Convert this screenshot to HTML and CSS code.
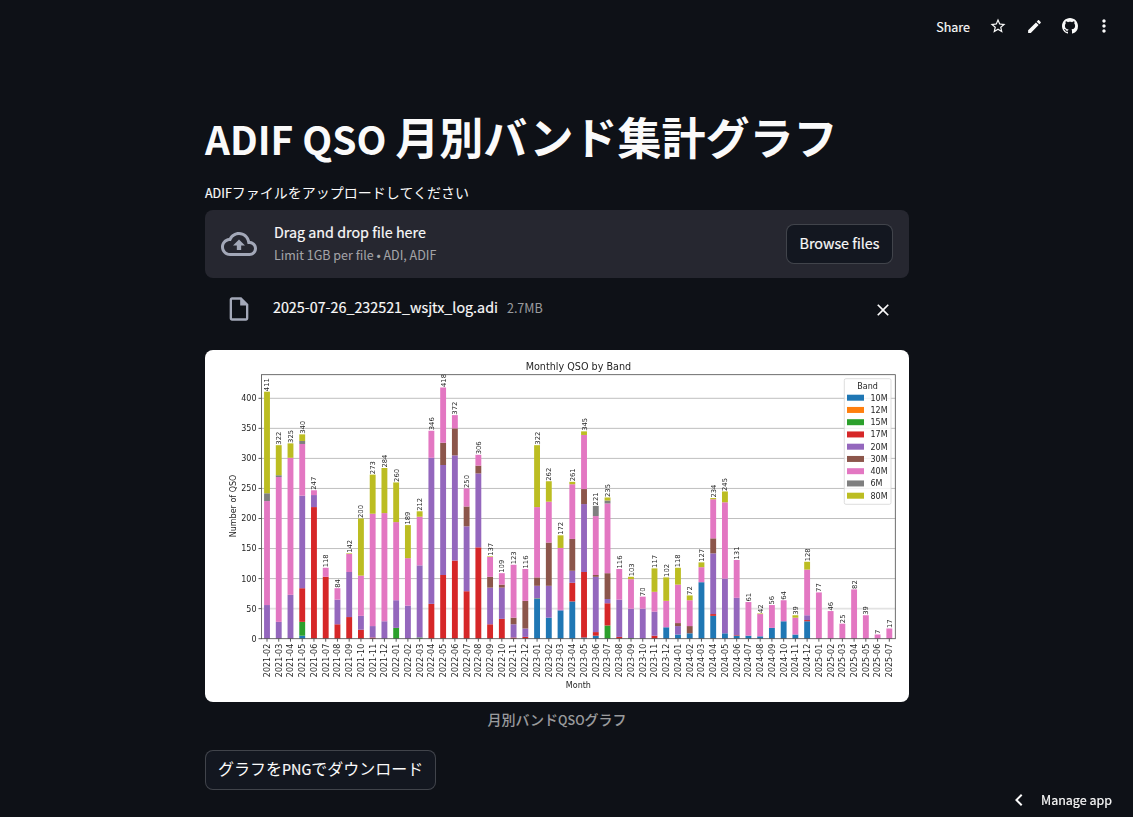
FILE: index.html
```html
<!DOCTYPE html>
<html lang="ja">
<head>
<meta charset="utf-8">
<title>ADIF QSO 月別バンド集計グラフ</title>
<link rel="stylesheet" href="styles.css">
</head>
<body>
<header class="topbar">
  <span class="share ink">Share</span>
  <span class="tool"><svg class="i18" viewBox="0 0 24 24"><path d="M22 9.24l-7.19-.62L12 2 9.19 8.63 2 9.24l5.46 4.73L5.82 21 12 17.27 18.18 21l-1.63-7.03L22 9.24zM12 15.4l-3.76 2.27 1-4.28-3.32-2.88 4.38-.38L12 6.1l1.71 4.04 4.38.38-3.32 2.88 1 4.28L12 15.4z"/></svg></span>
  <span class="tool"><svg class="i17" viewBox="0 0 24 24"><path d="M3 17.25V21h3.75L17.81 9.94l-3.75-3.75L3 17.25zM20.71 7.04c.39-.39.39-1.02 0-1.41l-2.34-2.34c-.39-.39-1.02-.39-1.41 0l-1.83 1.83 3.75 3.75 1.83-1.83z"/></svg></span>
  <span class="tool"><svg class="i16" viewBox="0 0 16 16"><path d="M8 0C3.58 0 0 3.58 0 8c0 3.54 2.29 6.53 5.47 7.59.4.07.55-.17.55-.38 0-.19-.01-.82-.01-1.49-2.01.37-2.53-.49-2.69-.94-.09-.23-.48-.94-.82-1.13-.28-.15-.68-.52-.01-.53.63-.01 1.08.58 1.23.82.72 1.21 1.87.87 2.33.66.07-.52.28-.87.51-1.07-1.78-.2-3.64-.89-3.64-3.95 0-.87.31-1.59.82-2.15-.08-.2-.36-1.02.08-2.12 0 0 .67-.21 2.2.82.64-.18 1.32-.27 2-.27.68 0 1.36.09 2 .27 1.53-1.04 2.2-.82 2.2-.82.44 1.1.16 1.92.08 2.12.51.56.82 1.27.82 2.15 0 3.07-1.87 3.75-3.65 3.95.29.25.54.73.54 1.48 0 1.07-.01 1.93-.01 2.2 0 .21.15.46.55.38A8.013 8.013 0 0016 8c0-4.42-3.58-8-8-8z"/></svg></span>
  <span class="tool tool-last"><svg class="i20" viewBox="0 0 24 24"><path d="M12 8c1.1 0 2-.9 2-2s-.9-2-2-2-2 .9-2 2 .9 2 2 2zm0 2c-1.1 0-2 .9-2 2s.9 2 2 2 2-.9 2-2-.9-2-2-2zm0 6c-1.1 0-2 .9-2 2s.9 2 2 2 2-.9 2-2-.9-2-2-2z"/></svg></span>
</header>

<main class="main">
  <h1 class="title"><span class="lat lat-title">ADIF QSO </span>月別バンド集計グラフ</h1>
  <label class="field-label"><span class="lat ink">ADIF</span>ファイルをアップロードしてください</label>
  <section class="dropzone">
    <svg class="cloud" viewBox="0 0 24 24"><path d="M19.35 10.04C18.67 6.59 15.64 4 12 4 9.11 4 6.6 5.64 5.35 8.04 2.34 8.36 0 10.91 0 14c0 3.31 2.69 6 6 6h13c2.76 0 5-2.24 5-5 0-2.64-2.05-4.78-4.65-4.96zM19 18H6c-2.21 0-4-1.79-4-4 0-2.05 1.53-3.76 3.56-3.97l1.07-.11.5-.95C8.08 7.14 9.94 6 12 6c2.62 0 4.88 1.86 5.39 4.43l.3 1.5 1.53.11c1.56.1 2.78 1.41 2.78 2.96 0 1.65-1.35 3-3 3zM8 13h2.55v3h2.9v-3H16l-4-4z"/></svg>
    <div class="drop-text">
      <div class="drop-title ink">Drag and drop file here</div>
      <div class="drop-limit">Limit 1GB per file • ADI, ADIF</div>
    </div>
    <button class="btn browse"><span class="lat ink">Browse files</span></button>
  </section>
  <section class="file-row">
    <svg class="file-icon" viewBox="0 0 24 24"><path d="M14 2H6c-1.1 0-1.99.9-1.99 2L4 20c0 1.1.89 2 1.99 2H18c1.1 0 2-.9 2-2V8l-6-6zM6 20V4h7v5h5v11H6z"/></svg>
    <span class="file-name ink">2025-07-26_232521_wsjtx_log.adi</span>
    <span class="file-size">2.7MB</span>
    <svg class="file-close" viewBox="0 0 24 24"><path d="M19 6.41L17.59 5 12 10.59 6.41 5 5 6.41 10.59 12 5 17.59 6.41 19 12 13.41 17.59 19 19 17.59 13.41 12z"/></svg>
  </section>
  <figure class="figure">
    <svg id="chart" class="chart" viewBox="0 0 704 352"></svg>
    <figcaption class="caption">月別バンド<span class="lat">QSO</span>グラフ</figcaption>
  </figure>
  <button class="btn download">グラフを<span class="lat ink">PNG</span>でダウンロード</button>
</main>

<div class="manage">
  <svg class="chev" viewBox="0 0 24 24"><path d="M15.41 7.41L14 6l-6 6 6 6 1.41-1.41L10.83 12z"/></svg>
  <span class="manage-text ink">Manage app</span>
</div>
<script src="chart.js"></script>
</body>
</html>
```
FILE: styles.css
```css
* { box-sizing: border-box; }
html, body { margin: 0; height: 100%; }
body {
  background: #0e1117;
  color: #fafafa;
  font-family: "Noto Sans CJK JP", "Noto Sans", sans-serif;
  font-size: 16px;
  overflow: hidden;
}
.lat { font-size: .895em; line-height: 1; }
.lat-title { font-size: .885em; }
.ink { -webkit-text-stroke: .18px currentColor; }
.topbar {
  height: 52px;
  display: flex;
  align-items: center;
  justify-content: flex-end;
  padding-right: 13px;
}
.share { font-size: 12.5px; margin-right: 10px; }
.tool { width: 36px; height: 24px; display: flex; align-items: center; justify-content: center; }
.tool-last { width: 32px; }
.tool svg { fill: #fafafa; display: block; }
.i16 { width: 16px; height: 16px; }
.i17 { width: 17px; height: 17px; }
.i18 { width: 18px; height: 18px; }
.i20 { width: 20px; height: 20px; }
.main {
  width: 704px;
  margin-left: 205px;
  padding-top: 44px;
  display: flex;
  flex-direction: column;
  align-items: flex-start;
}
.title {
  margin: 0;
  font-size: 44px;
  line-height: 80px;
  font-weight: 700;
  white-space: nowrap;
}
.field-label {
  font-size: 14px;
  line-height: 20px;
  margin-top: 6px;
  margin-bottom: 8px;
}
.dropzone {
  width: 100%;
  height: 68px;
  background: #262730;
  border-radius: 8px;
  display: flex;
  align-items: center;
  padding: 0 16px;
}
.cloud { width: 36px; height: 36px; fill: #a3a8b8; flex: none; }
.drop-text { flex: 1; margin-left: 17px; margin-top: -2px; }
.drop-title { font-size: 14.3px; line-height: 23px; margin-top: -2px; margin-bottom: 2px; }
.drop-limit { font-size: 12.5px; line-height: 20px; color: rgba(250, 250, 250, .6); }
.btn {
  font: inherit;
  color: #fafafa;
  background: #131720;
  border: 1px solid rgba(250, 250, 250, .2);
  border-radius: 8px;
  height: 40px;
  padding: 0 12px 3px;
  line-height: 1;
}
.browse { width: 107px; padding: 0 0 3px; }
.file-row {
  width: 100%;
  height: 48px;
  margin-top: 8px;
  display: flex;
  align-items: center;
  padding-left: 20px;
}
.file-icon { width: 28px; height: 28px; fill: #a3a8b8; flex: none; margin-right: 20px; margin-top: -2px; }
.file-name { font-size: 14.3px; line-height: 24px; margin-top: -6px; }
.file-size { font-size: 12.5px; color: rgba(250, 250, 250, .6); margin-left: 9px; margin-top: -6px; flex: 1; }
.file-close { width: 20px; height: 20px; fill: #fafafa; margin-right: 16px; }
.figure { margin: 16px 0 0; width: 100%; }
.chart {
  display: block;
  width: 704px;
  height: 352px;
  background: #fff;
  border-radius: 8px;
  font-family: "DejaVu Sans", sans-serif;
  filter: blur(.4px);
}
.caption {
  font-size: 14px;
  line-height: 20px;
  font-weight: 500;
  color: rgba(250, 250, 250, .6);
  text-align: center;
  margin-top: 7px;
}
.download { margin-top: 21px; }
.manage {
  position: fixed;
  right: 21px;
  bottom: 5px;
  display: flex;
  align-items: center;
  font-size: 14px;
  line-height: 24px;
}
.manage-text { font-size: 12.5px; }
.chev { width: 24px; height: 24px; fill: #fafafa; margin-right: 10px; }

.spine { stroke: #4a4a4a; stroke-width: .8; fill: none; }
.grid { stroke: #b8b8b8; stroke-width: .9; }
.grid-soft { stroke: #e2e2e2; stroke-width: 1.6; }
.tick { stroke: #333; stroke-width: .8; }
.t { fill: #262626; font-size: 8px; }
.t-end { text-anchor: end; }
.t-mid { text-anchor: middle; }
.t-title { font-size: 9.65px; }
.t-val { font-size: 6.8px; }
.legend-box { fill: #fff; fill-opacity: .8; stroke: #d4d4d4; stroke-width: .8; }
```
FILE: chart.js
```js
var NS = "http://www.w3.org/2000/svg";
var svg = document.getElementById("chart");
var COL = { a: "#1f77b4", b: "#ff7f0e", c: "#2ca02c", d: "#d62728", e: "#9467bd", f: "#8c564b", g: "#e377c2", h: "#7f7f7f", i: "#bcbd22" };
var BANDS = [["10M", "a"], ["12M", "b"], ["15M", "c"], ["17M", "d"], ["20M", "e"], ["30M", "f"], ["40M", "g"], ["6M", "h"], ["80M", "i"]];
/* month: segments as band letter + cumulative top */
var DATA = [
  ["2021-02", "e56 g229 h242 i411"], ["2021-03", "e28 g269 h272 i322"], ["2021-04", "e73 g301 i325"],
  ["2021-05", "a5 c28 d84 e238 g324 h329 i340"], ["2021-06", "d219 e239 g247"], ["2021-07", "d103 g118"],
  ["2021-08", "d24 e65 g84"], ["2021-09", "d36 e111 g141 i142"], ["2021-10", "d15 e38 g105 i200"],
  ["2021-11", "d2 e21 g208 i273"], ["2021-12", "e29 g209 i284"], ["2022-01", "c18 e64 g194 i260"],
  ["2022-02", "e55 g134 i189"], ["2022-03", "c2 e122 g203 i212"], ["2022-04", "d58 e301 g346"],
  ["2022-05", "d106 e289 f326 g418"], ["2022-06", "d130 e305 f350 g372"], ["2022-07", "d79 e187 f220 g250"],
  ["2022-08", "d152 e275 f288 g306"], ["2022-09", "d24 e85 f103 g136 i137"], ["2022-10", "d33 e85 f90 g109"],
  ["2022-11", "d2 e24 f35 g123"], ["2022-12", "d3 e17 f63 g116"], ["2023-01", "a66 c67 e88 f102 g219 i322"],
  ["2023-02", "a35 e88 f160 g228 i262"], ["2023-03", "a47 e48 g151 i172"], ["2023-04", "a62 d93 e113 f166 g257 i261"],
  ["2023-05", "a2 d111 e224 f249 g339 i345"], ["2023-06", "a5 d11 e103 f106 g204 h221"], ["2023-07", "c22 d59 e66 f109 g225 h230 i235"],
  ["2023-08", "d3 e65 g116"], ["2023-09", "c1 e50 g99 i103"], ["2023-10", "e50 g70"],
  ["2023-11", "d5 e45 g78 i117"], ["2023-12", "a19 g63 i102"], ["2024-01", "a7 e21 f26 g90 i118"],
  ["2024-02", "a9 f21 g64 i72"], ["2024-03", "a94 g119 i127"], ["2024-04", "a38 d41 e142 f167 g232 i234"],
  ["2024-05", "a9 e100 g227 i245"], ["2024-06", "a5 d6 e68 g131"], ["2024-07", "a5 g61"],
  ["2024-08", "a4 g41 i42"], ["2024-09", "a18 g56"], ["2024-10", "a29 g64"],
  ["2024-11", "a7 g35 i39"], ["2024-12", "a29 d31 e39 g115 i128"], ["2025-01", "g77"],
  ["2025-02", "g46"], ["2025-03", "g25"], ["2025-04", "g82"], ["2025-05", "g39"], ["2025-06", "g7"], ["2025-07", "g17"]
];
var L = 56.5, R = 690.3, T = 24.7, B = 288.7, K = 0.601, X0 = 62, DX = 11.742, W = 5.87;

function el(name, attrs, text) {
  var n = document.createElementNS(NS, name);
  for (var k in attrs) n.setAttribute(k, attrs[k]);
  if (text !== undefined) n.textContent = text;
  svg.appendChild(n);
  return n;
}

[50, 100, 150, 200, 250, 300, 350, 400, 0].forEach(function (v) {
  var y = B - v * K;
  if (v) el("line", { x1: L, x2: R, y1: y, y2: y, "class": v === 50 ? "grid grid-soft" : "grid" });
  el("line", { x1: L - 3, x2: L, y1: y, y2: y, "class": "tick" });
  el("text", { x: L - 5, y: y + 2.9, "class": "t t-end" }, v);
});

DATA.forEach(function (d, i) {
  var cx = X0 + i * DX, prev = 0;
  d[1].split(" ").forEach(function (seg) {
    var top = +seg.slice(1);
    el("rect", { x: cx - W / 2, width: W, y: B - top * K, height: (top - prev) * K, fill: COL[seg[0]] });
    prev = top;
  });
  el("line", { x1: cx, x2: cx, y1: B, y2: B + 3, "class": "tick" });
  var lx = cx + 2.9, ly = B + 5;
  el("text", { x: lx, y: ly, transform: "rotate(-90 " + lx + " " + ly + ")", "class": "t t-end" }, d[0]);
  var vx = cx + 2.5, vy = B - prev * K - 0.5;
  el("text", { x: vx, y: vy, transform: "rotate(-90 " + vx + " " + vy + ")", "class": "t t-val" }, prev);
});

el("rect", { x: L, y: T, width: R - L, height: B - T, "class": "spine" });
el("text", { x: 373.4, y: 20, "class": "t t-mid t-title" }, "Monthly QSO by Band");
el("text", { x: 373.4, y: 338, "class": "t t-mid" }, "Month");
el("text", { x: 30.5, y: 156, transform: "rotate(-90 30.5 156)", "class": "t t-mid" }, "Number of QSO");

el("rect", { x: 639.3, y: 28.7, width: 46.7, height: 125.6, rx: 1.6, "class": "legend-box" });
el("text", { x: 662.6, y: 38.7, "class": "t t-mid" }, "Band");
BANDS.forEach(function (b, i) {
  var y = 47.7 + i * 12.25;
  el("rect", { x: 642, y: y - 3, width: 17, height: 6, fill: COL[b[1]] });
  el("text", { x: 665.5, y: y + 2.9, "class": "t" }, b[0]);
});
```
